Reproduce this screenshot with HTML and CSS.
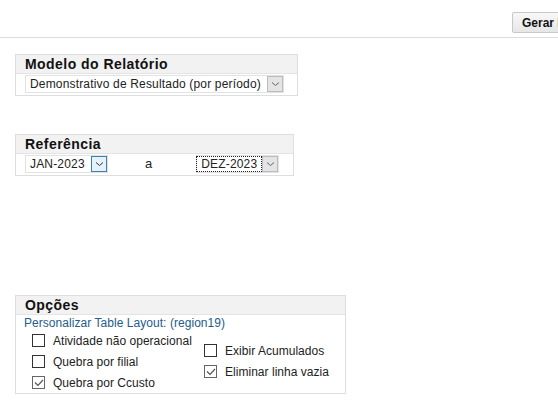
FILE: index.html
```html
<!DOCTYPE html>
<html>
<head>
<meta charset="utf-8">
<link rel="stylesheet" href="styles.css">
</head>
<body>
<div class="toolbar">
  <button class="btn">Gerar Relatório</button>
</div>

<section class="box box-modelo">
  <div class="box-head">Modelo do Relatório</div>
  <div class="box-body">
    <div class="select sel-modelo">
      <span class="sel-text">Demonstrativo de Resultado (por período)</span>
      <span class="sel-btn"><svg width="9" height="6" viewBox="0 0 9 6"><path d="M1 1.5 L4.5 4.5 L8 1.5" fill="none" stroke="#666" stroke-width="1"/></svg></span>
    </div>
  </div>
</section>

<section class="box box-ref">
  <div class="box-head">Referência</div>
  <div class="box-body ref-row">
    <div class="select sel-month">
      <span class="sel-text">JAN-2023</span>
      <span class="sel-btn hover"><svg width="9" height="6" viewBox="0 0 9 6"><path d="M1 1.5 L4.5 4.5 L8 1.5" fill="none" stroke="#333" stroke-width="1"/></svg></span>
    </div>
    <span class="ref-a">a</span>
    <div class="select sel-month">
      <span class="sel-text focus">DEZ-2023</span>
      <span class="sel-btn"><svg width="9" height="6" viewBox="0 0 9 6"><path d="M1 1.5 L4.5 4.5 L8 1.5" fill="none" stroke="#666" stroke-width="1"/></svg></span>
    </div>
  </div>
</section>

<section class="box box-opc">
  <div class="box-head">Opções</div>
  <div class="box-body opc-body">
    <a class="link" href="#">Personalizar Table Layout: (region19)</a>
    <div class="opc-cols">
      <div class="col col-left">
        <label class="chk"><span class="cb"></span>Atividade não operacional</label>
        <label class="chk"><span class="cb"></span>Quebra por filial</label>
        <label class="chk"><span class="cb checked"><svg width="10" height="8" viewBox="0 0 10 8"><path d="M1 3.5 L4 6.5 L9 1" fill="none" stroke="#555" stroke-width="1.2"/></svg></span>Quebra por Ccusto</label>
      </div>
      <div class="col col-right">
        <label class="chk"><span class="cb"></span>Exibir Acumulados</label>
        <label class="chk"><span class="cb checked"><svg width="10" height="8" viewBox="0 0 10 8"><path d="M1 3.5 L4 6.5 L9 1" fill="none" stroke="#555" stroke-width="1.2"/></svg></span>Eliminar linha vazia</label>
      </div>
    </div>
  </div>
</section>
</body>
</html>
```
FILE: styles.css
```css
html, body {
  margin: 0;
  padding: 0;
  overflow: hidden;
  background: #fff;
  font-family: "Liberation Sans", Arial, sans-serif;
  font-size: 12px;
  color: #222;
}

.toolbar {
  height: 38px;
  border-bottom: 1px solid #dcdcdc;
  padding-left: 512px;
  box-sizing: border-box;
  white-space: nowrap;
  padding-top: 12px;
}

.btn {
  height: 21px;
  padding: 0 9px;
  border: 1px solid #c8c8c8;
  border-radius: 2px;
  background: linear-gradient(#f8f8f8, #e6e6e6);
  font-family: "Liberation Sans", Arial, sans-serif;
  font-weight: bold;
  font-size: 12px;
  color: #111;
}

.box {
  margin-left: 15px;
  border: 1px solid #dedede;
  background: #fff;
}

.box-modelo { width: 281px; margin-top: 16px; }
.box-ref { width: 277px; margin-top: 38px; }
.box-opc { width: 329px; margin-top: 119px; }

.box-head {
  background: #f2f2f2;
  border-bottom: 1px solid #e4e4e4;
  height: 18px;
  line-height: 18px;
  padding-left: 9px;
  font-weight: bold;
  font-size: 14px;
  letter-spacing: 0.45px;
  color: #111;
}

.box-body {
  padding: 1px 0 2px 9px;
}

.select {
  display: inline-flex;
  align-items: center;
  height: 18px;
  border: 1px solid #e2e2e2;
  box-sizing: border-box;
}

.sel-modelo { width: 259px; }

.sel-text {
  padding: 0 4px;
  line-height: 14px;
  color: #222;
  letter-spacing: 0.17px;
}

.sel-text.focus {
  outline: 1px dotted #222;
  outline-offset: 0;
}

.sel-btn {
  width: 16px;
  height: 16px;
  box-sizing: border-box;
  border: 1px solid #bcbcbc;
  background: #e4e4e4;
  display: flex;
  align-items: center;
  justify-content: center;
  margin-left: auto;
}

.sel-btn.hover {
  border-color: #3c7fb1;
  background: #e5f1fb;
}

.ref-row {
  display: flex;
  align-items: center;
}

.sel-month { width: 83px; }

.ref-a {
  margin-left: 37px;
  margin-right: 44px;
  font-size: 13px;
  line-height: 14px;
}

.opc-body {
  padding: 1px 0 0 8px;
}

.link {
  color: #245c8c;
  text-decoration: none;
  display: block;
  line-height: 14px;
  letter-spacing: 0.05px;
}

.opc-cols {
  display: flex;
  padding-left: 8px;
}

.col {
  display: flex;
  flex-direction: column;
}

.col-left { width: 172px; }
.col-right { padding-top: 10px; }

.chk {
  display: flex;
  align-items: center;
  height: 21px;
  color: #222;
  letter-spacing: 0.03px;
}

.cb {
  width: 11px;
  height: 11px;
  border: 1px solid #333;
  margin-right: 8px;
  display: flex;
  align-items: center;
  justify-content: center;
  background: #fff;
}

.cb.checked { border-color: #666; }
```
